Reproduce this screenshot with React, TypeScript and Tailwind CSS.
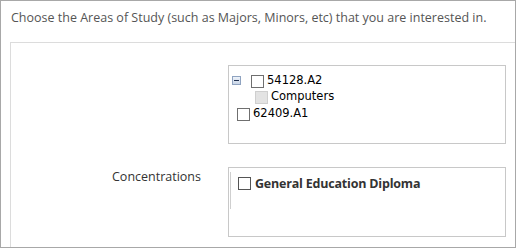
import { FunctionComponent } from "react";

const TreeBox: FunctionComponent<{ disabled?: boolean; className?: string }> = ({
  disabled = false,
  className = "",
}) => (
  <span
    className={`inline-block w-[13px] h-[13px] shrink-0 border ${
      disabled ? "border-[#cfcfcf] bg-[#e3e3e3]" : "border-[#6f6f6f] bg-white"
    } ${className}`}
  />
);

const App: FunctionComponent = () => {
  return (
    <div className="w-[516px] h-[248px] border border-[#a8a8a8] bg-white flex flex-col overflow-hidden font-['Open_Sans',sans-serif]">
      <p className="pl-[10px] pt-[8px] text-[12.5px] leading-[18px] text-[#555] whitespace-nowrap">
        Choose the Areas of Study (such as Majors, Minors, etc) that you are interested in.
      </p>
      <div className="ml-[9px] mt-[15px] flex-1 border-l border-t border-[#dcdcdc] flex flex-col pt-[22px] gap-[23px]">
        <div className="flex flex-row items-start gap-[27px]">
          <div className="w-[190px] shrink-0" />
          <div className="w-[278px] h-[79px] shrink-0 border border-[#c8c8c8] pt-[9px] pl-[3px] font-['DejaVu_Sans',Verdana,sans-serif] text-[11.5px] leading-[13px] text-black">
            <div className="flex flex-row items-start">
              <span className="mt-[1px] w-[9px] h-[9px] border border-[#8fa3c0] bg-gradient-to-b from-[#eef3fa] to-[#c9d5e6] flex items-center justify-center">
                <span className="block w-[5px] h-[1px] bg-[#1f2f4f]" />
              </span>
              <TreeBox className="ml-[10px]" />
              <span className="ml-[3px] -mt-[1px]">54128.A2</span>
            </div>
            <div className="flex flex-row items-start mt-[3px] pl-[23px]">
              <TreeBox disabled className="w-[12px] h-[12px]" />
              <span className="ml-[3px] -mt-[1px]">Computers</span>
            </div>
            <div className="flex flex-row items-start mt-[4px] pl-[5px]">
              <TreeBox />
              <span className="ml-[3px] -mt-[1px]">62409.A1</span>
            </div>
          </div>
        </div>
        <div className="flex flex-row items-start gap-[27px]">
          <div className="w-[190px] shrink-0 text-right text-[12.5px] leading-[20px] text-[#333]">
            Concentrations
          </div>
          <div className="w-[278px] h-[70px] shrink-0 border border-[#c8c8c8] pt-[4px] pl-[1px]">
            <div className="h-[37px] border-l border-[#cfcfcf] pl-[7px] pt-[4px] flex flex-row items-start gap-[4px]">
              <span className="mt-[1px] w-[13px] h-[13px] shrink-0 border border-[#555] bg-white" />
              <span className="text-[12.5px] leading-[15px] tracking-[-0.2px] font-bold text-[#333] whitespace-nowrap">
                General Education Diploma
              </span>
            </div>
          </div>
        </div>
      </div>
    </div>
  );
};

export default App;
